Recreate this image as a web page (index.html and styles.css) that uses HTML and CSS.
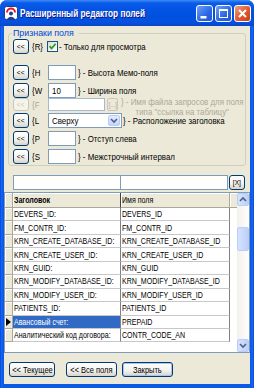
FILE: index.html
```html
<!DOCTYPE html>
<html lang="ru">
<head>
<meta charset="utf-8">
<title>Расширенный редактор полей</title>
<link rel="stylesheet" href="styles.css">
</head>
<body>
<div class="window">
  <div class="titlebar">
    <svg class="app-icon" width="14" height="14" viewBox="0 0 14 14">
      <rect x=".5" y=".5" width="13" height="13" rx="2" fill="#fff" stroke="#1C3F94"/>
      <path d="M3 6.5 A4 4 0 0 1 11 6.5" fill="none" stroke="#E02020" stroke-width="2"/>
      <circle cx="7" cy="7.5" r="2" fill="#1C3F94"/>
      <path d="M3 13 Q7 8.5 11 13 Z" fill="#1C3F94"/>
    </svg>
    <span class="title t">Расширенный редактор полей</span>
    <div class="caption-btns">
      <span class="cap-btn"><svg width="15" height="15" viewBox="0 0 15 15"><rect x="3.5" y="10" width="6" height="2.5" fill="#fff"/></svg></span>
      <span class="cap-btn"><svg width="15" height="15" viewBox="0 0 15 15"><rect x="3.5" y="3.5" width="8" height="8" fill="none" stroke="#fff"/><rect x="3.5" y="3" width="8" height="2" fill="#fff"/></svg></span>
      <span class="cap-btn close"><svg width="15" height="15" viewBox="0 0 15 15"><path d="M4 4 L11 11 M11 4 L4 11" stroke="#fff" stroke-width="2"/></svg></span>
    </div>
  </div>
  <div class="client">
    <fieldset class="group">
      <legend><span class="t lg">Признаки поля</span></legend>
      <div class="row r1">
        <span class="mini"><span class="t tc">&lt;&lt;</span></span>
        <span class="key t">{R}</span>
        <span class="check"><svg width="9" height="9" viewBox="0 0 9 9"><path d="M1.5 4.2 L3.6 6.4 L7.6 1.8" fill="none" stroke="#21A121" stroke-width="1.7"/></svg></span>
        <span class="desc t">- Только для просмотра</span>
      </div>
      <div class="row r2">
        <span class="mini"><span class="t tc">&lt;&lt;</span></span>
        <span class="key t">{H</span>
        <span class="edit w28"></span>
        <span class="desc t">} - Высота Мемо-поля</span>
      </div>
      <div class="row r3">
        <span class="mini"><span class="t tc">&lt;&lt;</span></span>
        <span class="key t">{W</span>
        <span class="edit w28"><span class="t">10</span></span>
        <span class="desc t">} - Ширина поля</span>
      </div>
      <div class="row r4">
        <span class="mini disabled"><span class="t tc">&lt;&lt;</span></span>
        <span class="key dis t">{F</span>
        <span class="edit w57 dis-edit"></span>
        <span class="dots"><span class="t tc">[...]</span></span>
        <span class="desc2 t">} - Имя файла запросов для поля<br>типа "ссылка на таблицу"</span>
      </div>
      <div class="row r5">
        <span class="mini"><span class="t tc">&lt;&lt;</span></span>
        <span class="key t">{L</span>
        <span class="combo"><span class="combo-text"><span class="t">Сверху</span></span><span class="combo-btn"><svg width="10" height="9" viewBox="0 0 10 9"><path d="M2 3 L5 6 L8 3" fill="none" stroke="#4D6185" stroke-width="1.6"/></svg></span></span>
        <span class="desc tight t">} - Расположение заголовка</span>
      </div>
      <div class="row r6">
        <span class="mini"><span class="t tc">&lt;&lt;</span></span>
        <span class="key t">{P</span>
        <span class="edit w28"></span>
        <span class="desc t">} - Отступ слева</span>
      </div>
      <div class="row r7">
        <span class="mini"><span class="t tc">&lt;&lt;</span></span>
        <span class="key t">{S</span>
        <span class="edit w28"></span>
        <span class="desc t">} - Межстрочный интервал</span>
      </div>
    </fieldset>

    <div class="filter">
      <span class="edit fcol"></span>
      <span class="edit fcol second"></span>
      <span class="xbtn"><span class="t tc">[X]</span></span>
    </div>

    <div class="grid">
      <div class="grid-main">
        <div class="grow head">
          <span class="ind"></span>
          <span class="c1"><span class="t">Заголовок</span></span>
          <span class="c2"><span class="t">Имя поля</span></span>
          <span class="fill"></span>
        </div>
        <div class="grow"><span class="ind"></span><span class="c1"><span class="t">DEVERS_ID:</span></span><span class="c2"><span class="t">DEVERS_ID</span></span></div>
        <div class="grow"><span class="ind"></span><span class="c1"><span class="t">FM_CONTR_ID:</span></span><span class="c2"><span class="t">FM_CONTR_ID</span></span></div>
        <div class="grow"><span class="ind"></span><span class="c1"><span class="t">KRN_CREATE_DATABASE_ID:</span></span><span class="c2"><span class="t">KRN_CREATE_DATABASE_ID</span></span></div>
        <div class="grow"><span class="ind"></span><span class="c1"><span class="t">KRN_CREATE_USER_ID:</span></span><span class="c2"><span class="t">KRN_CREATE_USER_ID</span></span></div>
        <div class="grow"><span class="ind"></span><span class="c1"><span class="t">KRN_GUID:</span></span><span class="c2"><span class="t">KRN_GUID</span></span></div>
        <div class="grow"><span class="ind"></span><span class="c1"><span class="t">KRN_MODIFY_DATABASE_ID:</span></span><span class="c2"><span class="t">KRN_MODIFY_DATABASE_ID</span></span></div>
        <div class="grow"><span class="ind"></span><span class="c1"><span class="t">KRN_MODIFY_USER_ID:</span></span><span class="c2"><span class="t">KRN_MODIFY_USER_ID</span></span></div>
        <div class="grow"><span class="ind"></span><span class="c1"><span class="t">PATIENTS_ID:</span></span><span class="c2"><span class="t">PATIENTS_ID</span></span></div>
        <div class="grow"><span class="ind cur"><svg width="5" height="8" viewBox="0 0 5 8"><path d="M0 0 L5 4 L0 8 Z" fill="#000"/></svg></span><span class="c1 sel"><span class="t">Авансовый счет:</span></span><span class="c2"><span class="t">PREPAID</span></span></div>
        <div class="grow"><span class="ind"></span><span class="c1"><span class="t">Аналитический код договора:</span></span><span class="c2"><span class="t">CONTR_CODE_AN</span></span></div>
      </div>
      <div class="vscroll">
        <span class="sb-btn"><svg width="10" height="11" viewBox="0 0 10 11"><path d="M2 7 L5 4 L8 7" fill="none" stroke="#4D6185" stroke-width="1.6"/></svg></span>
        <div class="sb-track"><span class="sb-thumb"></span></div>
        <span class="sb-btn"><svg width="10" height="11" viewBox="0 0 10 11"><path d="M2 4 L5 7 L8 4" fill="none" stroke="#4D6185" stroke-width="1.6"/></svg></span>
      </div>
    </div>

    <div class="buttons">
      <span class="btn b1"><span class="t tc">&lt;&lt; Текущее</span></span>
      <span class="btn b2"><span class="t tc">&lt;&lt; Все поля</span></span>
      <span class="btn b3 default"><span class="t tc">Закрыть</span></span>
    </div>
  </div>
</div>
</body>
</html>
```

FILE: styles.css
```css
:root {
  --ui: "Liberation Sans", Arial, sans-serif;
}
* { box-sizing: border-box; }
html, body { margin: 0; padding: 0; }
body {
  width: 254px;
  height: 388px;
  overflow: hidden;
  font-family: var(--ui);
  font-size: 9.5px;
  color: #000;
  background: #fff;
}
/* narrow text rendering: the original UI font is condensed */
.t {
  display: inline-block;
  white-space: nowrap;
  transform: scaleX(0.83);
  transform-origin: 0 50%;
}
.tc { transform-origin: 50% 50%; }
.lg { transform: scaleX(0.93); }

.window {
  width: 254px;
  height: 388px;
  display: flex;
  flex-direction: column;
  background: linear-gradient(90deg, #0831D9 0, #166AEE 1px, #0A5AE6 3px, #0A5AE6 251px, #166AEE 253px, #0831D9 254px);
  border-radius: 7px 7px 0 0;
  overflow: hidden;
}
.titlebar {
  height: 26px;
  flex: none;
  display: flex;
  align-items: center;
  padding: 0 3px 0 4px;
  background: linear-gradient(#3F8CF3 0, #0A5BEA 3px, #0455E5 8px, #0051DE 60%, #0451E0 85%, #0A47C8 100%);
}
.app-icon { flex: none; }
.title {
  margin-left: 2px;
  color: #fff;
  font-weight: bold;
  font-size: 11px;
  text-shadow: 1px 1px #0F1089;
  transform: scaleX(0.75);
}
.caption-btns {
  margin-left: auto;
  display: flex;
  gap: 2px;
}
.cap-btn {
  width: 17px;
  height: 17px;
  border: 1px solid #fff;
  border-radius: 3px;
  background: linear-gradient(135deg, #6FA0FA, #2B66E4 60%, #1F55D6);
  display: flex;
  align-items: center;
  justify-content: center;
}
.cap-btn.close {
  background: linear-gradient(135deg, #F0A080, #E0582E 55%, #C53E17);
}
.client {
  flex: 1;
  margin: 0 4px 4px;
  background: #ECE9D8;
  display: flex;
  flex-direction: column;
  min-height: 0;
}
.group {
  margin: 1px 4px 0;
  padding: 0 4px 1px;
  border: 1px solid #D0D0BF;
  border-radius: 3px;
  min-width: 0;
}
.group legend {
  padding: 0 1px;
  margin-left: -1px;
  color: #0046D5;
  line-height: 12px;
  font-size: 9.5px;
}
.row {
  display: flex;
  align-items: center;
  height: 15px;
}
.r2 { margin-top: 11px; }
.r3 { margin-top: 3px; }
.r4 { height: 13px; }
.r5 { margin-top: 2px; }
.r6, .r7 { margin-top: 3px; }

.mini {
  flex: none;
  width: 16px;
  height: 15px;
  margin-right: 3px;
  border: 1px solid #003C74;
  border-radius: 3px;
  background: linear-gradient(#FFFFFF, #F2F1EC 60%, #D8D3C8);
  font-size: 8px;
  display: flex;
  align-items: center;
  justify-content: center;
  color: #000;
}
.mini.disabled {
  height: 13px;
  border-color: #C9C7BA;
  background: #F5F4EA;
  color: #C9C7BA;
}
.key {
  flex: none;
  width: 16px;
}
.key.dis { color: #ACA899; }
.check {
  flex: none;
  width: 11px;
  height: 11px;
  margin-left: -1px;
  border: 1px solid #1C5180;
  background: linear-gradient(135deg, #DCDCD7, #FFFFFF);
  display: flex;
  align-items: center;
  justify-content: center;
}
.edit {
  flex: none;
  height: 15px;
  border: 1px solid #7F9DB9;
  background: #fff;
  padding-left: 3px;
  line-height: 13px;
  white-space: nowrap;
  overflow: hidden;
}
.w28 { width: 28px; }
.w57 { width: 57px; }
.dis-edit { height: 13px; border-color: #A7B9CE; }
.desc {
  margin-left: 2px;
}
.r1 .desc { margin-left: 1px; }
.desc.tight { margin-left: 1px; }
.dots {
  flex: none;
  width: 11px;
  height: 13px;
  margin-left: 2px;
  border: 1px solid #C9C7BA;
  border-radius: 2px;
  color: #ACA899;
  font-size: 7px;
  display: flex;
  align-items: center;
  justify-content: center;
}
.desc2 {
  align-self: flex-start;
  margin-left: 3px;
  margin-top: -1px;
  color: #ACA899;
  line-height: 9.5px;
  text-align: center;
}
.combo {
  flex: none;
  width: 74px;
  height: 15px;
  border: 1px solid #7F9DB9;
  background: #fff;
  display: flex;
  align-items: center;
}
.combo-text {
  flex: 1;
  padding-left: 3px;
  overflow: hidden;
}
.combo-btn {
  width: 12px;
  height: 11px;
  margin-right: 1px;
  border: 1px solid #B9CCF7;
  border-radius: 2px;
  background: linear-gradient(#E4ECFE, #C3D4FB);
  display: flex;
  align-items: center;
  justify-content: center;
}

.filter {
  display: flex;
  height: 15px;
  margin: 9px 0 0 9px;
}
.fcol { width: 108px; }
.fcol.second { margin-left: -1px; }
.xbtn {
  flex: none;
  width: 16px;
  height: 15px;
  margin-left: 1px;
  border: 1px solid #003C74;
  border-radius: 3px;
  background: linear-gradient(#FFFFFF, #F2F1EC 60%, #D8D3C8);
  font-size: 8px;
  display: flex;
  align-items: center;
  justify-content: center;
}

.grid {
  flex: none;
  height: 161px;
  margin-top: 2px;
  display: flex;
  border: 1px solid #7F9DB9;
  background: #fff;
}
.grid-main {
  flex: 1;
  display: flex;
  flex-direction: column;
  min-width: 0;
}
.grow {
  display: flex;
  height: 13.44px;
  flex: none;
  font-size: 8.5px;
}
.grow.head { height: 15px; }
.ind {
  flex: none;
  width: 8px;
  background: #ECE9D8;
  border-right: 1px solid #ACA899;
  border-bottom: 1px solid #ACA899;
  box-shadow: inset 1px 1px #fff;
  display: flex;
  align-items: center;
  justify-content: center;
}
.c1, .c2 {
  flex: none;
  border-bottom: 1px solid #C8C8C8;
  border-right: 1px solid #808080;
  padding-left: 1px;
  white-space: nowrap;
  overflow: hidden;
  display: flex;
  align-items: center;
}
.c1 { width: 108px; }
.c2 { width: 109px; }
.head .c1, .head .c2, .head .fill {
  background: #ECE9D8;
  border-bottom: 1px solid #ACA899;
  box-shadow: inset 1px 1px #fff;
}
.head .c1 { font-weight: bold; border-right-color: #404040; }
.head .c2 { border-right-color: #ACA899; }
.head .fill { flex: 1; }
.c1.sel {
  background: #316AC5;
  color: #fff;
}
.vscroll {
  flex: none;
  width: 12px;
  display: flex;
  flex-direction: column;
  background: linear-gradient(90deg, #F3F1EC, #FEFEFB);
}
.sb-btn {
  flex: none;
  height: 13px;
  border: 1px solid #BBCCF6;
  border-radius: 2px;
  background: linear-gradient(90deg, #D7E2FD, #BCCFFA);
  display: flex;
  align-items: center;
  justify-content: center;
}
.sb-track {
  flex: 1;
}
.sb-thumb {
  display: block;
  height: 24px;
  margin-top: 21px;
  border: 1px solid #BBCCF6;
  border-radius: 2px;
  background: linear-gradient(90deg, #D7E2FD, #BCCFFA);
}

.buttons {
  display: flex;
  margin-top: 9px;
  padding-left: 5px;
}
.btn {
  flex: none;
  height: 15px;
  border: 1px solid #003C74;
  border-radius: 3px;
  background: linear-gradient(#FFFFFF, #F2F1EC 60%, #D8D3C8);
  font-size: 9px;
  display: flex;
  align-items: center;
  justify-content: center;
}
.b1 { width: 46px; }
.b2 { width: 51px; margin-left: 11px; }
.b3 { width: 51px; margin-left: 5px; }
.btn.default { box-shadow: inset 0 0 0 1px #A9C4F0; }
```
